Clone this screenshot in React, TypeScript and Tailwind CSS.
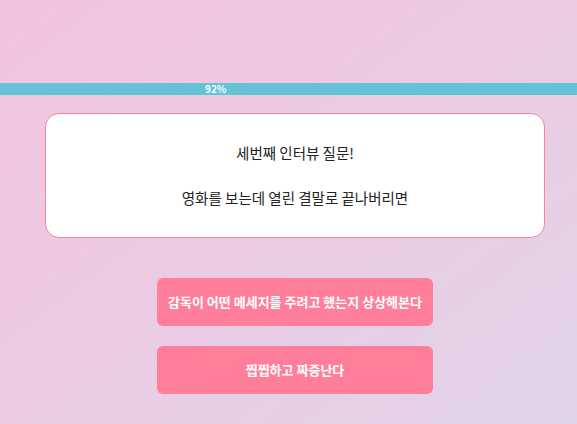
export default function App() {
  return (
    <div
      className="min-h-screen w-full bg-gradient-to-br from-[#f3c3de] to-[#e2d4e9] pt-[83px]"
      style={{ fontFamily: '"Noto Sans CJK KR", "Noto Sans", sans-serif' }}
    >
      {/* progress */}
      <div className="h-[12px] w-full bg-[#64c4d6]">
        <div className="pl-[205px] text-[10px] leading-[12px] font-bold text-white">92%</div>
      </div>

      <div className="ml-[45px] w-[500px]">
        <div className="mt-[18px] flex h-[125px] flex-col items-center justify-center gap-[25px] rounded-[14px] border border-[#f6849f] bg-white text-[14.5px] leading-[20px] text-[#222]">
          <p>세번째 인터뷰 질문!</p>
          <p>영화를 보는데 열린 결말로 끝나버리면</p>
        </div>

        <div className="mt-[40px] flex flex-col items-center gap-[20px]">
          <button className="h-[48px] w-[276px] rounded-[6px] bg-[#ff7f9b] text-[13px] font-bold text-white">
            감독이 어떤 메세지를 주려고 했는지 상상해본다
          </button>
          <button className="h-[48px] w-[276px] rounded-[6px] bg-[#ff7f9b] text-[13px] font-bold text-white">
            찝찝하고 짜증난다
          </button>
        </div>
      </div>
    </div>
  );
}
